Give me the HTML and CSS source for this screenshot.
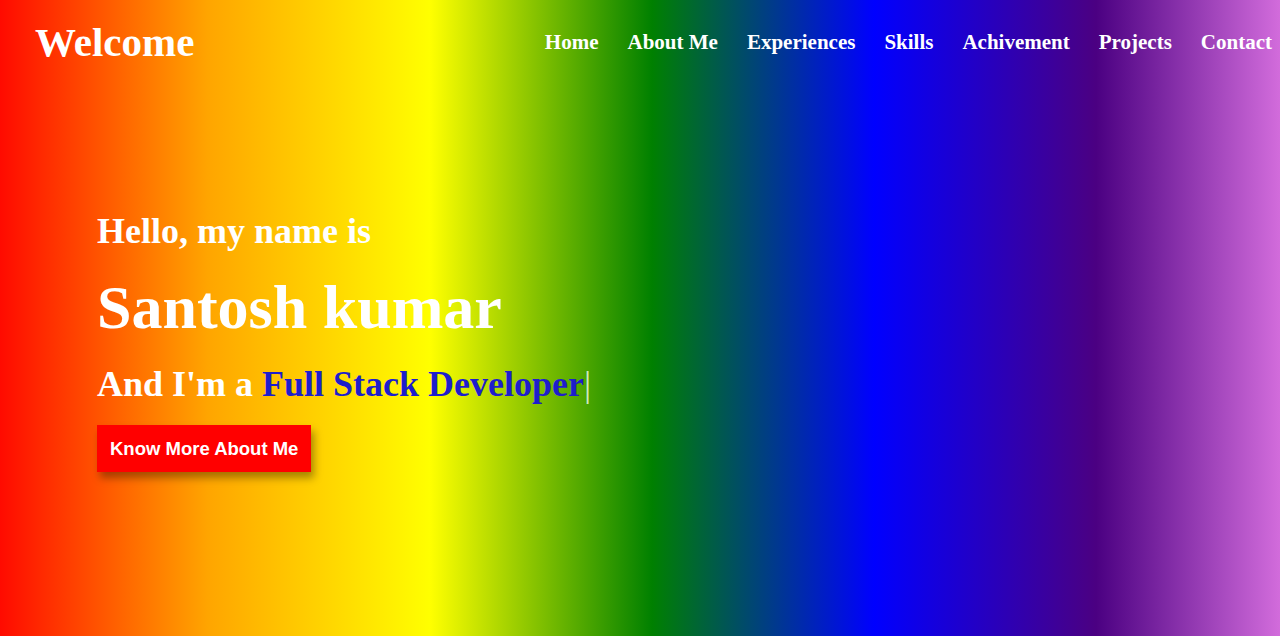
FILE: index.html
```html
<!DOCTYPE html>
<html>
<head>
<meta charset="utf-8">
<link rel="stylesheet" href="styles.css">
</head>
<body>
<div class="page">
  <header class="header">
    <div class="logo">Welcome</div>
    <nav class="nav">
      <a>Home</a>
      <a>About Me</a>
      <a>Experiences</a>
      <a>Skills</a>
      <a>Achivement</a>
      <a>Projects</a>
      <a>Contact</a>
    </nav>
  </header>
  <section class="hero">
    <h3 class="hello">Hello, my name is</h3>
    <h1 class="name">Santosh kumar</h1>
    <h2 class="role">And I'm a <span class="typed">Full Stack Developer</span><span class="cursor">|</span></h2>
    <button class="btn">Know More About Me</button>
  </section>
</div>
</body>
</html>
```
FILE: styles.css
```css
html, body {
  margin: 0;
  padding: 0;
}
body {
  font-family: "Liberation Serif", "Times New Roman", serif;
  color: #fff;
}
.page {
  width: 1280px;
  height: 636px;
  background: linear-gradient(to right, red -14px, orange 208px, yellow 430px, green 652px, blue 874px, indigo 1096px, violet 1318px);
  overflow: hidden;
}
.header {
  display: flex;
  justify-content: space-between;
  align-items: center;
  padding: 17px 8px 0 35px;
}
.logo {
  font-size: 41px;
  font-weight: bold;
  line-height: 50px;
}
.nav {
  display: flex;
  gap: 29px;
}
.nav a {
  font-size: 21px;
  font-weight: bold;
  color: #fff;
}
.hero {
  display: flex;
  flex-direction: column;
  align-items: flex-start;
  padding: 144px 0 0 97px;
}
.hello {
  margin: 0;
  font-size: 36px;
  line-height: 40px;
}
.name {
  margin: 20px 0 0;
  font-size: 62px;
  line-height: 72px;
}
.role {
  margin: 17px 0 0;
  font-size: 36px;
  line-height: 48px;
}
.typed {
  color: #1e1ecc;
}
.cursor {
  color: rgba(255, 255, 255, 0.75);
  font-weight: normal;
}
.btn {
  margin-top: 17px;
  background: red;
  color: #fff;
  border: none;
  font-family: "Liberation Sans", Arial, sans-serif;
  font-weight: bold;
  font-size: 18.5px;
  line-height: 21px;
  padding: 13px 13px;
  box-shadow: 3px 6px 8px rgba(0, 0, 0, 0.35);
}
```
